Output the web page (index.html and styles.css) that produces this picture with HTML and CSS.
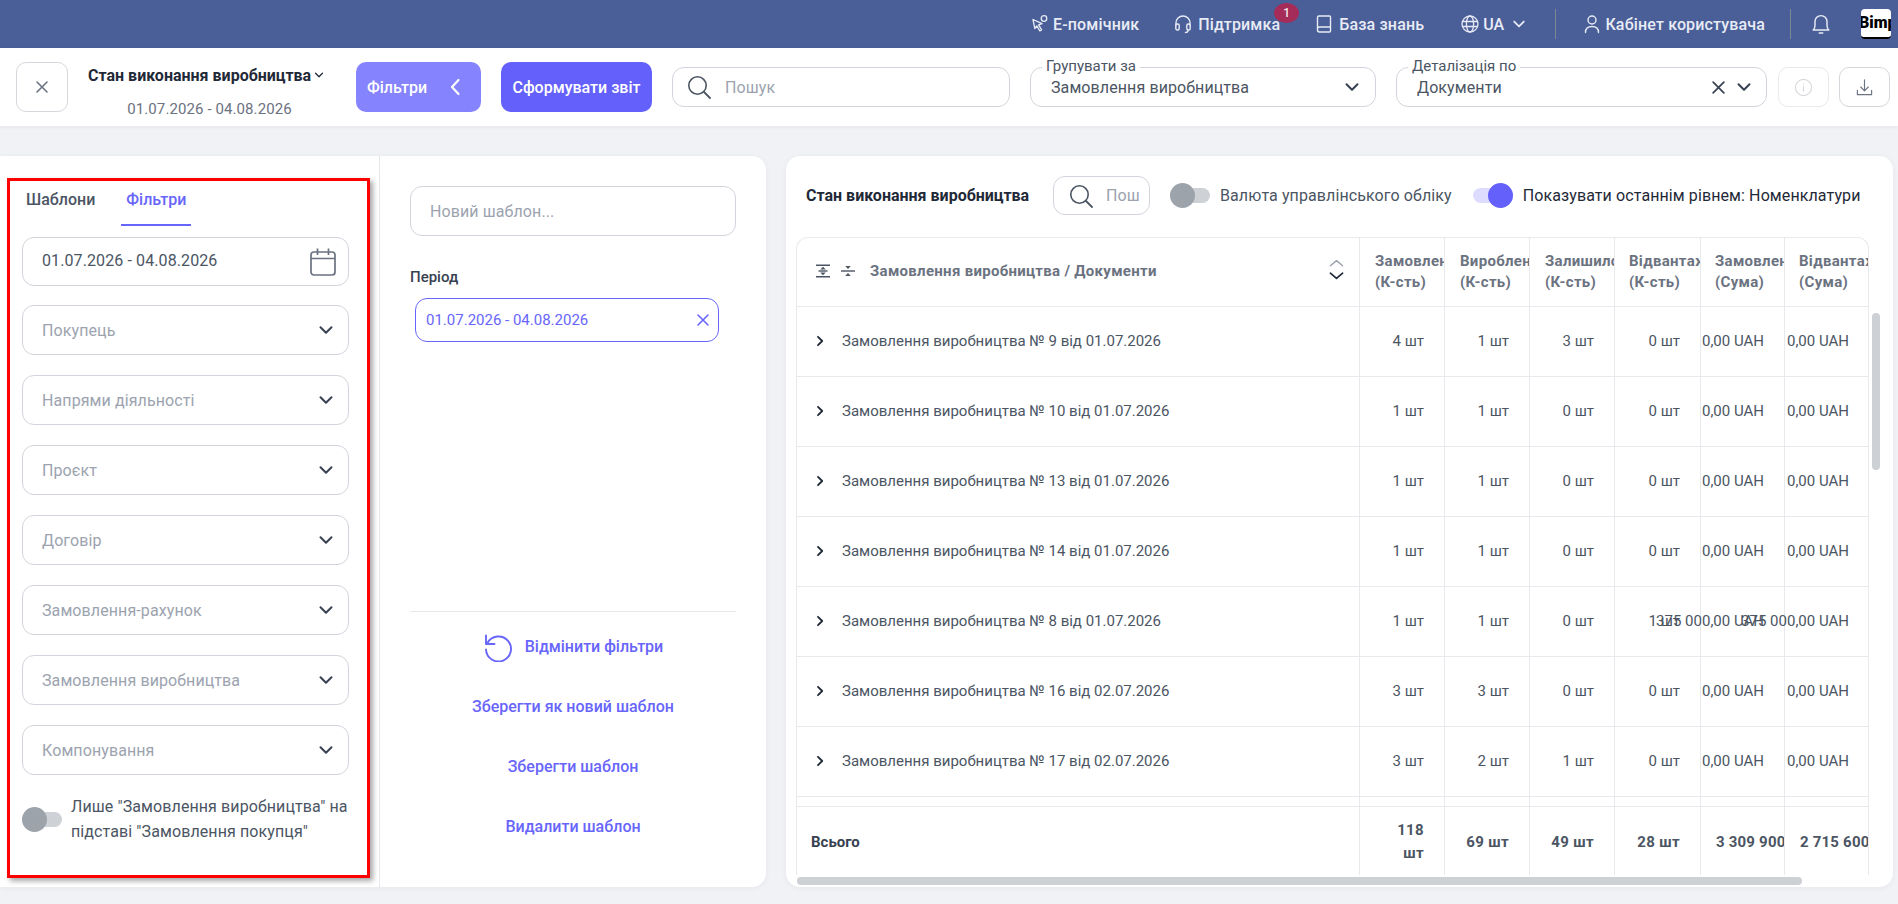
FILE: index.html
```html
<!DOCTYPE html>
<html lang="uk">
<head>
<meta charset="utf-8">
<title>Стан виконання виробництва</title>
<link rel="stylesheet" href="styles.css">
</head>
<body>
<svg class="sprite" width="0" height="0" aria-hidden="true">
  <symbol id="chev" viewBox="0 0 16 16"><path d="M2.500 5.200 8 10.800l5.500-5.600" fill="none" stroke="currentColor" stroke-width="2" stroke-linecap="round" stroke-linejoin="round"/></symbol>
  <symbol id="right" viewBox="0 0 12 12"><path d="M4 1.800 8.200 6 4 10.200" fill="none" stroke="currentColor" stroke-width="1.800" stroke-linecap="round" stroke-linejoin="round"/></symbol>
  <symbol id="cross" viewBox="0 0 14 14"><path d="M2 2l10 10M12 2 2 12" fill="none" stroke="currentColor" stroke-width="1.600" stroke-linecap="round"/></symbol>
  <symbol id="search" viewBox="0 0 24 24"><circle cx="10.500" cy="10.500" r="8.700" fill="none" stroke="currentColor" stroke-width="1.600"/><path d="M17 17l6 6" fill="none" stroke="currentColor" stroke-width="1.800" stroke-linecap="round"/></symbol>
</svg>

<header class="topbar">
  <a class="top-item">
    <svg class="ti" viewBox="0 0 20 20"><path d="M3 5.500l9 4.200-3.400 1.200 3 5-1.800 1-3-5L4.800 14.500z" fill="none" stroke="currentColor" stroke-width="1.300" stroke-linejoin="round"/><circle cx="14" cy="4.500" r="2.800" fill="none" stroke="currentColor" stroke-width="1.300"/></svg>
    <span>Е-помічник</span>
  </a>
  <a class="top-item gap-support">
    <svg class="ti ti-wide" viewBox="0 0 20 20"><path d="M3 11V9a7 7 0 0 1 14 0v2M15 16.500c0 1.500-1 2-2.500 2" fill="none" stroke="currentColor" stroke-width="1.400" stroke-linecap="round"/><rect x="2.800" y="10" width="3.400" height="6" rx="1.500" fill="none" stroke="currentColor" stroke-width="1.400"/><rect x="13.800" y="10" width="3.400" height="6" rx="1.500" fill="none" stroke="currentColor" stroke-width="1.400"/></svg>
    <span>Підтримка</span>
    <b class="badge">1</b>
  </a>
  <a class="top-item gap-base">
    <svg class="ti ti-wide" viewBox="0 0 20 20"><path d="M3.500 15V3.500a1.500 1.500 0 0 1 1.500-1.500h10.500a1 1 0 0 1 1 1V17a1 1 0 0 1-1 1H5.500a2 2 0 0 1-2-2v-1a2 2 0 0 1 2-2h11" fill="none" stroke="currentColor" stroke-width="1.400" stroke-linejoin="round"/></svg>
    <span>База знань</span>
  </a>
  <a class="top-item gap-lang">
    <svg class="ti" viewBox="0 0 20 20"><g fill="none" stroke="currentColor" stroke-width="1.300"><circle cx="10" cy="10" r="8"/><ellipse cx="10" cy="10" rx="3.600" ry="8"/><path d="M2.500 7.500h15M2.500 12.500h15"/></g></svg>
    <span>UA</span>
    <svg class="top-chev"><use href="#chev"/></svg>
  </a>
  <i class="top-sep sep-a"></i>
  <a class="top-item gap-user">
    <svg class="ti" viewBox="0 0 20 20"><g fill="none" stroke="currentColor" stroke-width="1.400" stroke-linecap="round"><circle cx="10" cy="6" r="4"/><path d="M3.500 18.500c0-4 2.500-6 6.500-6s6.500 2 6.500 6"/></g></svg>
    <span>Кабінет користувача</span>
  </a>
  <i class="top-sep sep-b"></i>
  <svg class="bell" viewBox="0 0 20 20"><path d="M3.500 15c1-1 1.500-2 1.500-4V8a5 5 0 0 1 10 0v3c0 2 .5 3 1.500 4zM8.500 17.500h3" fill="none" stroke="currentColor" stroke-width="1.200" stroke-linecap="round" stroke-linejoin="round"/></svg>
  <div class="avatar"><span>Bimp</span></div>
</header>

<section class="toolbar">
  <button class="square-btn"><svg class="x-icon"><use href="#cross"/></svg></button>
  <div class="report-title">
    <div class="report-name">Стан виконання виробництва<svg class="mini-chev"><use href="#chev"/></svg></div>
    <div class="report-date">01.07.2026 - 04.08.2026</div>
  </div>
  <button class="btn btn-filter">Фільтри<svg class="btn-back" viewBox="0 0 12 20"><path d="M9.500 3 3 10l6.500 7" fill="none" stroke="currentColor" stroke-width="2.200" stroke-linecap="round" stroke-linejoin="round"/></svg></button>
  <button class="btn btn-primary">Сформувати звіт</button>
  <label class="field search-main">
    <svg class="search-icon"><use href="#search"/></svg>
    <span class="placeholder">Пошук</span>
  </label>
  <div class="field select-group">
    <span class="float-label">Групувати за</span>
    <span class="value">Замовлення виробництва</span>
    <svg class="field-chev"><use href="#chev"/></svg>
  </div>
  <div class="field select-detail">
    <span class="float-label">Деталізація по</span>
    <span class="value">Документи</span>
    <svg class="detail-x"><use href="#cross"/></svg>
    <svg class="field-chev"><use href="#chev"/></svg>
  </div>
  <button class="tool-btn info-btn"><svg viewBox="0 0 20 20" class="tool-icon"><g fill="none" stroke="currentColor" stroke-width="1.200" stroke-linecap="round"><circle cx="10" cy="10" r="8.500"/><path d="M10 9v5M10 6v.3"/></g></svg></button>
  <button class="tool-btn download-btn"><svg viewBox="0 0 20 20" class="tool-icon"><path d="M10 2v11M6 9.500l4 4 4-4M2.500 13v4.500h15V13" fill="none" stroke="currentColor" stroke-width="1.200" stroke-linecap="round" stroke-linejoin="round"/></svg></button>
</section>

<main class="content">
  <section class="panel filter-panel">
    <div class="filter-col">
      <div class="tabs">
        <span class="tab">Шаблони</span>
        <span class="tab active">Фільтри</span>
      </div>
      <div class="filter-list">
        <div class="field filter-field date-field"><span class="value-dark">01.07.2026 - 04.08.2026</span>
          <svg class="calendar" viewBox="0 0 26 28"><g fill="none" stroke="currentColor" stroke-width="1.700"><rect x="1" y="4" width="24" height="23" rx="3"/><path d="M1 10.500h24M7.500 .5v6.500M18.500 .5v6.500"/></g></svg>
        </div>
        <div class="field filter-field"><span class="placeholder">Покупець</span><svg class="field-chev"><use href="#chev"/></svg></div>
        <div class="field filter-field"><span class="placeholder">Напрями діяльності</span><svg class="field-chev"><use href="#chev"/></svg></div>
        <div class="field filter-field"><span class="placeholder">Проєкт</span><svg class="field-chev"><use href="#chev"/></svg></div>
        <div class="field filter-field"><span class="placeholder">Договір</span><svg class="field-chev"><use href="#chev"/></svg></div>
        <div class="field filter-field"><span class="placeholder">Замовлення-рахунок</span><svg class="field-chev"><use href="#chev"/></svg></div>
        <div class="field filter-field"><span class="placeholder">Замовлення виробництва</span><svg class="field-chev"><use href="#chev"/></svg></div>
        <div class="field filter-field"><span class="placeholder">Компонування</span><svg class="field-chev"><use href="#chev"/></svg></div>
      </div>
      <div class="only-row">
        <span class="toggle"><i></i></span>
        <span class="only-text">Лише "Замовлення виробництва" на підставі "Замовлення покупця"</span>
      </div>
    </div>
    <div class="template-col">
      <div class="field template-name"><span class="placeholder">Новий шаблон...</span></div>
      <div class="period-label">Період</div>
      <div class="chip"><span>01.07.2026 - 04.08.2026</span><svg class="chip-x"><use href="#cross"/></svg></div>
      <div class="template-actions">
        <a class="action"><svg class="undo" viewBox="0 0 30 30"><path d="M3 3.500V12h8.500M4.500 11A12.500 12.500 0 1 1 3 17.500" fill="none" stroke="currentColor" stroke-width="1.900" stroke-linecap="round" stroke-linejoin="round"/></svg>Відмінити фільтри</a>
        <a class="action">Зберегти як новий шаблон</a>
        <a class="action">Зберегти шаблон</a>
        <a class="action">Видалити шаблон</a>
      </div>
    </div>
  </section>

  <section class="panel report-panel">
    <div class="report-head">
      <strong class="report-head-title">Стан виконання виробництва</strong>
      <label class="field search-mini"><svg class="search-icon"><use href="#search"/></svg><span class="placeholder">Пош</span></label>
      <span class="toggle head-toggle"><i></i></span>
      <span class="head-label">Валюта управлінського обліку</span>
      <span class="toggle on"><i></i></span>
      <span class="head-label on-label">Показувати останнім рівнем: Номенклатури</span>
    </div>
    <div class="table-area">
      <div class="table">
        <div class="tr thead">
          <div class="td th-main">
            <svg class="tree-icon" viewBox="0 0 14 14"><g fill="currentColor"><rect x="0" y="0.500" width="14" height="1.500"/><rect x="0" y="12" width="14" height="1.500"/><rect x="2.500" y="6.300" width="9" height="1.400"/><path d="M7 2.700l2.800 2.700H4.200zM7 11.300l2.800-2.700H4.200z"/></g></svg>
            <svg class="tree-icon second" viewBox="0 0 14 14"><g fill="currentColor"><rect x="0" y="6.300" width="14" height="1.400"/><path d="M7 5 4.200 2h5.600zM7 9l2.800 3H4.200z"/></g></svg>
            <span class="th-title">Замовлення виробництва / Документи</span>
            <span class="sorter">
              <svg class="sort-up" viewBox="0 0 16 8"><path d="M1.500 7 8 1.500 14.500 7" fill="none" stroke="currentColor" stroke-width="1.500" stroke-linecap="round" stroke-linejoin="round"/></svg>
              <svg class="sort-down" viewBox="0 0 16 8"><path d="M1.500 1 8 6.500 14.500 1" fill="none" stroke="currentColor" stroke-width="1.800" stroke-linecap="round" stroke-linejoin="round"/></svg>
            </span>
          </div>
          <div class="td th">Замовлено<br>(К-сть)</div>
          <div class="td th">Вироблено<br>(К-сть)</div>
          <div class="td th">Залишилось<br>(К-сть)</div>
          <div class="td th th-tight">Відвантажено<br>(К-сть)</div>
          <div class="td th th-tight">Замовлено<br>(Сума)</div>
          <div class="td th th-tight">Відвантажено<br>(Сума)</div>
        </div>
        <div class="tr">
          <div class="td name"><svg class="row-chev"><use href="#right"/></svg>Замовлення виробництва № 9 від 01.07.2026</div>
          <div class="td num"><span>4 шт</span></div><div class="td num"><span>1 шт</span></div><div class="td num"><span>3 шт</span></div><div class="td num"><span>0 шт</span></div><div class="td num"><span>0,00 UAH</span></div><div class="td num"><span>0,00 UAH</span></div>
        </div>
        <div class="tr">
          <div class="td name"><svg class="row-chev"><use href="#right"/></svg>Замовлення виробництва № 10 від 01.07.2026</div>
          <div class="td num"><span>1 шт</span></div><div class="td num"><span>1 шт</span></div><div class="td num"><span>0 шт</span></div><div class="td num"><span>0 шт</span></div><div class="td num"><span>0,00 UAH</span></div><div class="td num"><span>0,00 UAH</span></div>
        </div>
        <div class="tr">
          <div class="td name"><svg class="row-chev"><use href="#right"/></svg>Замовлення виробництва № 13 від 01.07.2026</div>
          <div class="td num"><span>1 шт</span></div><div class="td num"><span>1 шт</span></div><div class="td num"><span>0 шт</span></div><div class="td num"><span>0 шт</span></div><div class="td num"><span>0,00 UAH</span></div><div class="td num"><span>0,00 UAH</span></div>
        </div>
        <div class="tr">
          <div class="td name"><svg class="row-chev"><use href="#right"/></svg>Замовлення виробництва № 14 від 01.07.2026</div>
          <div class="td num"><span>1 шт</span></div><div class="td num"><span>1 шт</span></div><div class="td num"><span>0 шт</span></div><div class="td num"><span>0 шт</span></div><div class="td num"><span>0,00 UAH</span></div><div class="td num"><span>0,00 UAH</span></div>
        </div>
        <div class="tr">
          <div class="td name"><svg class="row-chev"><use href="#right"/></svg>Замовлення виробництва № 8 від 01.07.2026</div>
          <div class="td num"><span>1 шт</span></div><div class="td num"><span>1 шт</span></div><div class="td num"><span>0 шт</span></div><div class="td num"><span>1 шт</span></div><div class="td num"><span>375 000,00 UAH</span></div><div class="td num"><span>375 000,00 UAH</span></div>
        </div>
        <div class="tr">
          <div class="td name"><svg class="row-chev"><use href="#right"/></svg>Замовлення виробництва № 16 від 02.07.2026</div>
          <div class="td num"><span>3 шт</span></div><div class="td num"><span>3 шт</span></div><div class="td num"><span>0 шт</span></div><div class="td num"><span>0 шт</span></div><div class="td num"><span>0,00 UAH</span></div><div class="td num"><span>0,00 UAH</span></div>
        </div>
        <div class="tr">
          <div class="td name"><svg class="row-chev"><use href="#right"/></svg>Замовлення виробництва № 17 від 02.07.2026</div>
          <div class="td num"><span>3 шт</span></div><div class="td num"><span>2 шт</span></div><div class="td num"><span>1 шт</span></div><div class="td num"><span>0 шт</span></div><div class="td num"><span>0,00 UAH</span></div><div class="td num"><span>0,00 UAH</span></div>
        </div>
        <div class="tr sliver">
          <div class="td"></div><div class="td"></div><div class="td"></div><div class="td"></div><div class="td"></div><div class="td"></div><div class="td"></div>
        </div>
        <div class="tr total">
          <div class="td total-name">Всього</div>
          <div class="td total-num wrap">118 шт</div>
          <div class="td total-num">69 шт</div>
          <div class="td total-num">49 шт</div>
          <div class="td total-num">28 шт</div>
          <div class="td total-clip">3 309 900</div>
          <div class="td total-clip">2 715 600</div>
        </div>
      </div>
      <div class="vbar"></div>
    </div>
    <div class="hbar"></div>
  </section>
</main>
</body>
</html>
```
FILE: styles.css
```css
* { box-sizing: border-box; }
html, body { margin: 0; height: 904px; overflow: hidden; }
body {
  background: #f0f2f5;
  font-family: Roboto, "Noto Sans", sans-serif;
  font-size: 16px;
  color: #374151;
}
button { font-family: inherit; cursor: pointer; padding: 0; }
.sprite { position: absolute; }
svg { display: block; flex: none; }

/* top bar */
.topbar {
  height: 48px;
  background: #4a5f98;
  color: #e8ebf5;
  display: flex;
  align-items: center;
  padding-left: 1030px;
  font-size: 16px;
  font-weight: 500;
  letter-spacing: .15px;
  white-space: nowrap;
}
.top-item { display: flex; align-items: center; position: relative; }
.ti { width: 20px; height: 20px; margin-right: 3px; }
.ti-wide { margin-right: 5px; }
.gap-support { margin-left: 34px; }
.gap-base { margin-left: 34px; }
.gap-lang { margin-left: 36px; }
.gap-user { margin-left: 26px; }
.badge {
  position: absolute;
  left: 101px;
  top: -11px;
  width: 25px;
  height: 20px;
  border-radius: 50%;
  background: #a52c58;
  color: #f3e6ec;
  font-size: 12px;
  font-weight: 500;
  line-height: 20px;
  text-align: center;
}
.top-chev { width: 14px; height: 14px; margin-left: 8px; }
.top-sep { width: 1px; height: 30px; background: #7d8795; }
.sep-a { margin-left: 29px; }
.sep-b { margin-left: 25px; }
.bell { width: 24px; height: 24px; margin-left: 18px; }
.avatar {
  width: 30px;
  height: 30px;
  margin-left: 28px;
  border-radius: 4px;
  overflow: hidden;
  background: #fff;
  border-bottom: 2px solid #000;
  color: #000;
  font-size: 16px;
  font-weight: 900;
  line-height: 28px;
  letter-spacing: 0;
}
.avatar span { display: block; margin-left: -2px; }

/* tool bar */
.toolbar {
  height: 78px;
  background: #fff;
  display: flex;
  align-items: center;
  gap: 20px;
  padding-left: 16px;
  box-shadow: 0 1px 4px rgba(30, 40, 70, .06);
}
.square-btn {
  width: 52px;
  height: 50px;
  border: 1px solid #d5d7dc;
  border-radius: 10px;
  background: #fff;
  color: #6b7280;
  display: flex;
  align-items: center;
  justify-content: center;
}
.x-icon { width: 14px; height: 14px; }
.report-title { width: 248px; height: 62px; padding-top: 8px; display: flex; flex-direction: column; align-items: center; justify-content: space-between; flex: none; }
.report-name { font-size: 16px; font-weight: 700; color: #1f2937; display: flex; align-items: center; line-height: 24px; align-self: flex-start; white-space: nowrap; }
.mini-chev { width: 10px; height: 10px; margin: -2px 0 0 3px; }
.report-date { font-size: 15px; letter-spacing: .1px; color: #6b7280; line-height: 18px; margin-right: 5px; }
.btn {
  height: 50px;
  border: 0;
  border-radius: 10px;
  color: #fff;
  font-size: 16px;
  font-weight: 500;
  display: flex;
  align-items: center;
  justify-content: center;
  white-space: nowrap;
  flex: none;
}
.btn-filter { width: 125px; background: #8583fd; justify-content: flex-start; padding-left: 11px; }
.btn-back { width: 12px; height: 20px; margin-left: 22px; }
.btn-primary { width: 151px; background: #6460fb; }

.field {
  border: 1px solid #d1d5db;
  border-radius: 12px;
  background: #fff;
  display: flex;
  align-items: center;
  position: relative;
  flex: none;
}
.placeholder { color: #9ca3af; white-space: nowrap; letter-spacing: .1px; }
.value { color: #4b5563; white-space: nowrap; margin-left: 20px; flex: 1; letter-spacing: .1px; }
.value-dark { color: #4b5563; white-space: nowrap; flex: 1; letter-spacing: .1px; }
.search-main { width: 338px; height: 40px; padding-left: 14px; }
.search-icon { width: 24px; height: 24px; color: #4b5563; margin-right: 14px; }
.select-group { width: 346px; height: 40px; padding-right: 15px; }
.select-detail { width: 371px; height: 40px; padding-right: 14px; }
.float-label {
  position: absolute;
  left: 11px;
  top: -11px;
  padding: 0 4px;
  background: #fff;
  font-size: 15px;
  line-height: 18px;
  color: #4b5563;
  white-space: nowrap;
}
.field-chev { width: 16px; height: 16px; color: #374151; }
.detail-x { width: 15px; height: 15px; margin-right: 10px; color: #374151; }
.tool-btn {
  width: 51px;
  height: 40px;
  border: 1px solid #d5d7dc;
  border-radius: 10px;
  background: #fff;
  color: #6b7280;
  display: flex;
  align-items: center;
  justify-content: center;
  flex: none;
}
.info-btn { margin-left: -9px; border-color: #e8e9ec; color: #d6d8dc; }
.download-btn { margin-left: -10px; }
.tool-icon { width: 19px; height: 19px; }

/* panels */
.content {
  display: flex;
  gap: 20px;
  padding-top: 30px;
  height: 761px;
  align-items: flex-start;
}
.panel {
  background: #fff;
  height: 731px;
  box-shadow: 0 1px 6px rgba(30, 40, 70, .05);
  flex: none;
}
.filter-panel { width: 766px; border-radius: 0 14px 14px 0; display: flex; }
.filter-col {
  width: 363px;
  height: 700px;
  margin: 22px 0 0 7px;
  border: 3px solid #f00;
  box-shadow: 3px 3px 5px rgba(60, 60, 60, .45);
  padding: 0 12px;
  flex: none;
}
.tabs { display: flex; height: 45px; margin-left: -1px; gap: 6px; }
.tab {
  padding: 0 5px;
  font-size: 16px;
  font-weight: 500;
  line-height: 38px;
  color: #4b5563;
}
.tab.active { color: #6865fb; border-bottom: 2px solid #6865fb; width: 70px; }
.tab:first-child { padding-right: 20px; }
.filter-list { margin-top: 11px; display: flex; flex-direction: column; gap: 20px; width: 327px; }
.filter-field { height: 50px; padding: 0 14px 0 19px; justify-content: space-between; }
.date-field { height: 49px; margin-bottom: -1px; padding-bottom: 2px; }
.calendar { width: 26px; height: 28px; color: #6b7280; margin: 2px -2px 0 0; }
.only-row { display: flex; margin-top: 19px; align-items: center; }
.only-text { margin-left: 9px; line-height: 25px; color: #4b5563; width: 284px; letter-spacing: .1px; }
.toggle { position: relative; display: block; width: 40px; height: 15px; background: #ced1d6; border-radius: 8px; flex: none; }
.toggle i { position: absolute; left: 0; top: -5px; width: 25px; height: 25px; border-radius: 50%; background: #9ca3ab; }
.toggle.on { background: #dedcfe; margin-left: 21px; }
.toggle.on i { left: auto; right: 0; background: #6460fb; }

.template-col {
  width: 387px;
  padding: 30px 30px 0 30px;
  border-left: 1px solid #e5e7eb;
  margin-left: 9px;
  display: flex;
  flex-direction: column;
  position: relative;
}
.template-name { height: 50px; width: 326px; padding-left: 19px; }
.period-label { margin-top: 31px; font-size: 15px; font-weight: 500; line-height: 20px; color: #374151; }
.chip {
  width: 304px;
  height: 44px;
  margin: 11px 0 0 5px;
  border: 1px solid #6865fb;
  border-radius: 12px;
  display: flex;
  align-items: center;
  justify-content: space-between;
  padding: 0 8px 0 10px;
  font-size: 15px;
  color: #6865fb;
}
.chip-x { width: 14px; height: 14px; }
.template-actions {
  margin-top: 269px;
  border-top: 1px solid #e5e7eb;
  display: flex;
  flex-direction: column;
  align-items: center;
  padding-top: 10px;
}
.action {
  height: 60px;
  display: flex;
  align-items: center;
  font-size: 16px;
  font-weight: 500;
  color: #6865fb;
  white-space: nowrap;
}
.action:first-child { height: 54px; padding-bottom: 5px; }
.undo { width: 30px; height: 30px; margin-right: 12px; }

/* report */
.report-panel { width: 1107px; border-radius: 14px; padding: 20px 0 0 11px; }
.report-head { height: 39px; display: flex; align-items: center; font-size: 16px; }
.report-head-title { font-size: 16px; font-weight: 700; color: #1f2937; width: 235px; margin-left: 9px; white-space: nowrap; flex: none; }
.search-mini { width: 97px; height: 39px; padding-left: 15px; overflow: hidden; margin-left: 12px; }
.search-mini .search-icon { margin-right: 13px; }
.head-toggle { margin-left: 20px; }
.head-label { margin-left: 10px; white-space: nowrap; color: #4b5563; letter-spacing: .1px; }
.on-label { color: #1f2937; }

.table-area { display: flex; margin: 22px 0 0 -1px; }
.table {
  width: 1073px;
  height: 638px;
  overflow: hidden;
  border: 1px solid #e8e9ec;
  border-bottom: 0;
  border-radius: 12px 12px 0 0;
  flex: none;
}
.tr {
  display: grid;
  grid-template-columns: 563px 85px 85px 85px 86px 84px 84px;
  height: 70px;
  border-bottom: 1px solid #e8e9ec;
}
.td { border-right: 1px solid #e8e9ec; font-size: 15px; color: #4b5563; min-width: 0; }
.td:last-child { border-right: 0; }
.thead { height: 69px; }
.th {
  overflow: hidden;
  white-space: nowrap;
  padding: 13px 0 0 15px;
  font-size: 15px;
  font-weight: 700;
  letter-spacing: .3px;
  line-height: 21px;
  color: #6b7280;
}
.th-tight { padding-left: 14px; }
.th-main { display: flex; align-items: center; padding: 0 0 2px 19px; color: #4b5563; }
.tree-icon { width: 14px; height: 14px; }
.tree-icon.second { margin-left: 11px; }
.th-title { margin-left: 15px; font-size: 15px; font-weight: 700; letter-spacing: .3px; color: #6b7280; white-space: nowrap; }
.sorter { margin-left: auto; margin-right: 15px; display: flex; flex-direction: column; align-items: center; gap: 5px; margin-top: -4px; }
.sort-up { width: 15px; height: 8px; color: #9ca3af; }
.sort-down { width: 15px; height: 8px; color: #1f2937; }
.name { display: flex; align-items: center; padding: 0 0 2px 17px; white-space: nowrap; }
.row-chev { width: 12px; height: 12px; margin-right: 16px; color: #1f2937; }
.num { display: flex; align-items: center; justify-content: flex-end; padding: 0 20px 2px 0; white-space: nowrap; }
.num span { flex: none; }
.sliver { height: 10px; }
.total { height: 70px; border-bottom: 0; }
.total-name { display: flex; align-items: center; padding-left: 14px; font-size: 15px; font-weight: 700; color: #374151; }
.total-num {
  display: flex;
  align-items: center;
  justify-content: flex-end;
  text-align: right;
  padding: 0 20px 0 15px;
  font-weight: 700;
  letter-spacing: .35px;
  line-height: 23px;
  white-space: nowrap;
}
.total-num.wrap { white-space: normal; }
.total-clip { display: flex; align-items: center; padding-left: 15px; font-weight: 700; letter-spacing: .2px; white-space: nowrap; overflow: hidden; }
.vbar { width: 8px; height: 157px; margin: 76px 0 0 3px; border-radius: 4px; background: #cdd0d5; flex: none; }
.hbar { width: 1005px; height: 8px; margin: 2px 0 0 0; border-radius: 4px; background: #cdd0d5; }
```
